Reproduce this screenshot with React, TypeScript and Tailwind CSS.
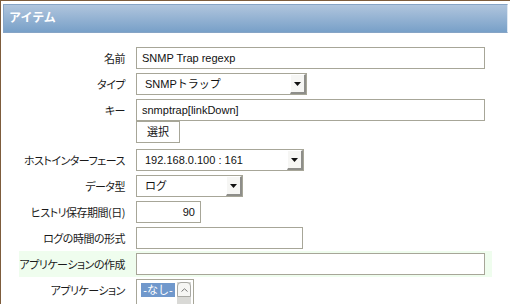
import React from 'react';

const jp = "font-['Liberation_Sans','Noto_Sans_CJK_JP',sans-serif]";
const jpLabel = "font-['Noto_Sans_CJK_JP',sans-serif] [font-feature-settings:'palt'] tracking-[-0.5px]";

const Label = ({ text }: { text: string }) => (
  <div className={`w-[111px] shrink-0 pr-[5px] flex justify-end whitespace-nowrap text-[11px] leading-[26px] text-[#1a1a1a] ${jpLabel}`}>
    <span>{text}</span>
  </div>
);

const TextBox = ({ w, value = '', right = false }: { w: string; value?: string; right?: boolean }) => (
  <div
    className={`${w} h-[22px] border border-[#a7a698] bg-white px-[5px] text-[11px] leading-[20px] text-[#111] ${right ? 'text-right' : ''}`}
  >
    {value}
  </div>
);

const Select = ({ w, value }: { w: string; value: string }) => (
  <div className={`${w} h-[22px] flex border border-[#a7a698] bg-white`}>
    <div className="flex-1 pl-[8px] text-[11px] leading-[20px] text-[#111]">{value}</div>
    <div className="w-[16px] h-full flex items-center justify-center bg-[#f6f6f4] border-l border-t border-white border-r-2 border-b-2 border-r-[#8e8e8a] border-b-[#8e8e8a]">
      <svg width="7" height="4" viewBox="0 0 7 4">
        <path d="M0 0h7L3.5 4z" fill="#111" />
      </svg>
    </div>
  </div>
);

const Row = ({ label, green = false, children }: { label: string; green?: boolean; children: React.ReactNode }) => (
  <div className={`flex ${green ? 'bg-[#effdee]' : ''}`}>
    <Label text={label} />
    <div className="flex-1 pl-[6px] pr-[7px] py-[2px]">{children}</div>
  </div>
);

export default function App() {
  return (
    <div className={`w-[510px] h-[304px] overflow-hidden bg-white border-t border-l border-[#7d5c3c] ${jp}`}>
      <div className="ml-[2px] mr-[2px] mt-[3px] h-[29px] border border-[#86a4c6] border-r-[#dfe8f2] bg-gradient-to-b from-[#b0c5dd] to-[#78a0c8] pl-[5px] text-[12px] font-bold leading-[27px] text-white">
        アイテム
      </div>

      <div className="ml-[18px] w-[473px] mt-[12px] flex flex-col">
        <Row label="名前">
          <TextBox w="w-[349px]" value="SNMP Trap regexp" />
        </Row>
        <Row label="タイプ">
          <Select w="w-[171px]" value="SNMPトラップ" />
        </Row>
        <div className="flex">
          <Label text="キー" />
          <div className="flex-1 pl-[6px] pr-[7px] pt-[2px] pb-[4px]">
            <TextBox w="w-[349px]" value="snmptrap[linkDown]" />
            <div className="w-[44px] h-[22px] border border-[#a7a698] bg-white text-center text-[11px] leading-[20px] text-[#111]">
              選択
            </div>
          </div>
        </div>
        <Row label="ホストインターフェース">
          <Select w="w-[168px]" value="192.168.0.100 : 161" />
        </Row>
        <Row label="データ型">
          <Select w="w-[107px]" value="ログ" />
        </Row>
        <Row label="ヒストリ保存期間(日)">
          <TextBox w="w-[65px]" value="90" right />
        </Row>
        <Row label="ログの時間の形式">
          <TextBox w="w-[167px]" />
        </Row>
        <Row label="アプリケーションの作成" green>
          <TextBox w="w-[349px]" />
        </Row>
        <Row label="アプリケーション">
          <div className="w-[58px] h-[60px] flex border border-[#a7a698] bg-white p-[2px]">
            <div className="flex-1">
              <div className="mt-[1px] ml-[2px] w-[34px] h-[14px] bg-[#7098cc] text-[11px] leading-[14px] text-white text-center">-なし-</div>
            </div>
            <div className="w-[14px] flex flex-col bg-[#d9d9d6]">
              <div className="h-[15px] rounded-t-[4px] border border-[#a9a9a4] bg-[#f6f6f4] flex items-center justify-center">
                <svg width="7" height="4" viewBox="0 0 7 4">
                  <path d="M0.5 3.5L3.5 0.8L6.5 3.5" stroke="#777" fill="none" strokeWidth="1" />
                </svg>
              </div>
            </div>
          </div>
        </Row>
      </div>
    </div>
  );
}
